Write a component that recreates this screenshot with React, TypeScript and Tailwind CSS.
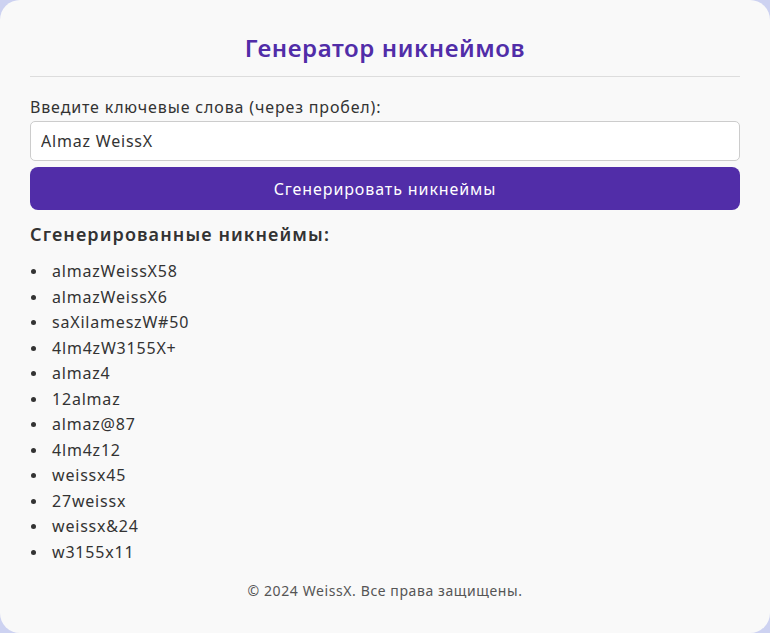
import { useState } from "react";

const nicknames = [
    "almazWeissX58",
    "almazWeissX6",
    "saXilameszW#50",
    "4lm4zW3155X+",
    "almaz4",
    "12almaz",
    "almaz@87",
    "4lm4z12",
    "weissx45",
    "27weissx",
    "weissx&24",
    "w3155x11",
];

export default function App() {
    const [keywords, setKeywords] = useState("Almaz WeissX");

    return (
        <div className="min-h-screen bg-[#cdd2f1] font-['Noto_Sans',sans-serif] text-[#333]">
            <div className="h-[633px] rounded-[20px] bg-[#f9f9f9] px-[30px] pt-[32px]">
                {/* Header */}
                <h1 className="border-b border-[#ddd] pb-[12px] text-center text-[24px] leading-[32px] font-semibold tracking-[0.6px] text-[#512da8]">
                    Генератор никнеймов
                </h1>

                {/* Form */}
                <label className="mt-[18px] mb-[2px] block text-[16px] leading-[24px] tracking-[0.85px]">
                    Введите ключевые слова (через пробел):
                </label>
                <input
                    value={keywords}
                    onChange={(e) => setKeywords(e.target.value)}
                    className="block h-[40px] w-full rounded-[5px] border border-[#ccc] bg-white px-[10px] text-[16px] tracking-[0.8px] text-[#333] outline-none"
                />
                <button className="mt-[6px] block h-[43px] w-full rounded-[8px] bg-[#512da8] text-[16px] tracking-[0.9px] text-white">
                    Сгенерировать никнеймы
                </button>

                {/* Results */}
                <h2 className="mt-[10px] mb-[11px] text-[18px] leading-[28px] font-semibold tracking-[1.1px]">
                    Сгенерированные никнеймы:
                </h2>
                <ul className="text-[16px] leading-[25.5px] tracking-[0.8px]">
                    {nicknames.map((n) => (
                        <li key={n} className="flex items-center">
                            <span className="ml-px mr-[16px] h-[5px] w-[5px] shrink-0 rounded-full bg-[#333]" />
                            {n}
                        </li>
                    ))}
                </ul>

                <p className="mt-[16px] text-center text-[14px] leading-[20px] tracking-[0.6px] text-[#555]">
                    © 2024 WeissX. Все права защищены.
                </p>
            </div>
        </div>
    );
}
